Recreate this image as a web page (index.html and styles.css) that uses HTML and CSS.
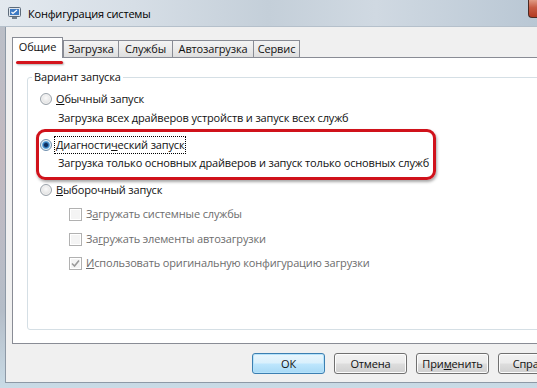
FILE: index.html
```html
<!DOCTYPE html>
<html lang="ru">
<head>
  <meta charset="UTF-8" />
  <title>Конфигурация системы</title>
  <link rel="stylesheet" href="styles.css">
</head>
<body>
  <div class="window">
    <div class="titlebar">
      <svg class="app-icon" width="13" height="12" viewBox="0 0 13 12">
        <rect x="0.5" y="0.5" width="12" height="9" rx="1" fill="#dfe5ec" stroke="#5d6b7a" />
        <rect x="2" y="2" width="9" height="6" fill="#3d79c2" />
        <path d="M3.5 5 L5 6.5 L9 3" stroke="#ffffff" stroke-width="1.2" fill="none" />
        <rect x="4" y="10" width="5" height="2" fill="#6f7d8b" />
      </svg>
      <span class="title">Конфигурация системы</span>
      <span class="close-btn"></span>
    </div>

    <div class="client">
      <div class="tabs">
        <div class="tab active">Общие</div>
        <div class="tab tab-boot">Загрузка</div>
        <div class="tab tab-services">Службы</div>
        <div class="tab tab-startup">Автозагрузка</div>
        <div class="tab tab-tools">Сервис</div>
      </div>

      <div class="panel">
        <fieldset class="group">
          <legend>Вариант запуска</legend>

          <div class="option">
            <span class="radio"></span>
            <span class="label"><u>О</u>бычный запуск</span>
          </div>
          <div class="hint">Загрузка всех драйверов устройств и запуск всех служб</div>

          <div class="marked">
            <div class="option option-gap">
              <span class="radio checked"></span>
              <span class="label focused">Диагности<u>ч</u>еский запуск</span>
            </div>
            <div class="hint hint-tight">Загрузка только основных драйверов и запуск только основных служб</div>
          </div>

          <div class="option option-gap">
            <span class="radio"></span>
            <span class="label"><u>В</u>ыборочный запуск</span>
          </div>

          <div class="check check-first">
            <span class="box"></span>
            <span class="label">З<u>а</u>гружать системные службы</span>
          </div>
          <div class="check">
            <span class="box"></span>
            <span class="label">За<u>г</u>ружать элементы автозагрузки</span>
          </div>
          <div class="check check-last">
            <span class="box">
              <svg width="9" height="9" viewBox="0 0 9 9"><path d="M1 4.5 L3.5 7 L8 1.5" stroke="#9a9a9a" stroke-width="1.6" fill="none" /></svg>
            </span>
            <span class="label"><u>И</u>спользовать оригинальную конфигурацию загрузки</span>
          </div>
        </fieldset>
      </div>

      <div class="buttons">
        <button class="btn btn-default">ОК</button>
        <button class="btn">Отмена</button>
        <button class="btn">При<u>м</u>енить</button>
        <button class="btn">Справка</button>
      </div>
    </div>
  </div>
</body>
</html>
```

FILE: styles.css
```css
* {
  box-sizing: border-box;
}
html, body {
  margin: 0;
  overflow: hidden;
}
body {
  width: 537px;
  height: 388px;
  font-family: 'Open Sans', 'Noto Sans', sans-serif;
  font-size: 11px;
  letter-spacing: -0.15px;
  color: #111;
  /* glass frame around the dialog */
  background: linear-gradient(180deg, #b9c0c9 0%, #c3b9c0 40%, #b4bdc8 80%, #c9dbe6 100%);
}
.window {
  display: flex;
  flex-direction: column;
  height: 388px;
}

/* Title bar */
.titlebar {
  height: 27px;
  display: flex;
  align-items: center;
  padding-left: 8px;
  background: linear-gradient(90deg, #e3e9ef 0%, #d6dee6 25%, #c4cfd9 50%, #d0d9e2 70%, #b9c7d4 100%);
  border-bottom: 1px solid #b5c0cb;
}
.app-icon {
  margin-right: 7px;
  margin-top: -1px;
}
.title {
  font-size: 11px;
  letter-spacing: -0.2px;
  color: #000;
}
.close-btn {
  align-self: flex-start;
  margin-left: auto;
  width: 9px;
  height: 18px;
  background: linear-gradient(180deg, #e09a84 0%, #c75a42 45%, #b33a22 100%);
  border: 1px solid #4a2a24;
  border-top: none;
  border-right: none;
  border-bottom-left-radius: 4px;
}

/* Client area */
.client {
  flex: 1;
  margin: 0 0 5px 5px;
  padding: 10px 0 0 6px;
  background: #f0f0f0;
  border-left: 1px solid #8d99a6;
  border-bottom: 1px solid #8d99a6;
}

.tabs {
  display: flex;
  align-items: flex-end;
}
.tab {
  height: 17px;
  line-height: 16px;
  text-align: center;
  border: 1px solid #898c95;
  border-bottom: none;
  background: linear-gradient(180deg, #f3f3f3 0%, #ebebeb 50%, #dedede 100%);
  margin-left: -1px;
}
.tab.active {
  position: relative;
  z-index: 1;
  width: 51px;
  height: 21px;
  line-height: 17px;
  margin-left: 0;
  margin-bottom: -1px;
  background: #fff;
}
/* red mark under the active tab */
.tab.active::after {
  content: "";
  position: absolute;
  left: 3px;
  top: 23px;
  width: 47px;
  height: 3px;
  border-radius: 2px;
  background: #d4141c;
  box-shadow: 1px 1px 2px rgba(0, 0, 0, 0.3);
}
.tab-boot {
  width: 56px;
  margin-left: 0;
}
.tab-services {
  width: 55px;
}
.tab-startup {
  width: 82px;
}
.tab-tools {
  width: 47px;
}

.panel {
  width: 600px;
  height: 287px;
  padding: 11px 0 0 14px;
  background: #fff;
  border: 1px solid #898c95;
}

.group {
  width: 600px;
  height: 261px;
  margin: 0;
  padding: 6px 0 0 12px;
  border: 1px solid #d5dfe5;
  border-radius: 3px;
}
.group legend {
  margin-left: -8px;
  padding: 0 2px;
  line-height: 16px;
}

.option,
.check {
  display: flex;
  align-items: center;
  height: 16px;
  line-height: 16px;
}
.option-gap {
  margin-top: 11px;
}
.option .label {
  margin-left: 4px;
}
.hint {
  margin-top: 3px;
  padding-left: 18px;
  line-height: 16px;
}
.hint-tight {
  margin-top: 2px;
}
.label u,
.btn u {
  text-decoration-thickness: 1px;
  text-underline-offset: 1px;
}
.focused {
  outline: 1px dotted #000;
  outline-offset: 0;
  padding: 0 1px;
  margin-left: 3px !important;
}

.marked {
  position: relative;
}
.marked::before {
  content: "";
  position: absolute;
  left: -4px;
  top: -8px;
  width: 394px;
  bottom: -9px;
  border: 3px solid #d0121b;
  border-radius: 9px;
  box-shadow: 1px 2px 3px rgba(0, 0, 0, 0.35);
}

.radio {
  width: 12px;
  height: 12px;
  border-radius: 50%;
  border: 1px solid #9ba3ab;
  background: radial-gradient(circle at 50% 40%, #fafafa 0%, #e7e7e7 55%, #cfcfcf 100%);
  box-shadow: inset 0 0 0 1px #f3f3f3;
}
.radio.checked {
  border-color: #6f8fae;
  background: radial-gradient(circle at 50% 50%, #0f2e5c 0 1.5px, #2e6fb0 2.5px, #7cc3ef 4px, #dde9f3 5px, #f0f4f8 100%);
}

.check {
  padding-left: 29px;
  color: #6d6d6d;
  margin-top: 9px;
}
.check-first {
  margin-top: 8px;
}
.check-last {
  margin-top: 8px;
}
.box {
  width: 13px;
  height: 13px;
  border: 1px solid #b1b1b1;
  background: #f4f4f4;
  box-shadow: inset 0 0 0 1px #fff;
  display: flex;
  align-items: center;
  justify-content: center;
  margin-right: 4px;
}

/* Dialog buttons */
.buttons {
  display: flex;
  gap: 9px;
  margin-top: 9px;
  padding-left: 240px;
}
.btn {
  flex: none;
  width: 73px;
  height: 21px;
  padding: 0;
  font-family: inherit;
  font-size: 11px;
  letter-spacing: inherit;
  color: #111;
  border: 1px solid #707070;
  border-radius: 3px;
  background: linear-gradient(180deg, #f2f2f2 0%, #ebebeb 48%, #dddddd 52%, #cfcfcf 100%);
  box-shadow: inset 0 0 0 1px #fcfcfc;
}
.btn-default {
  border-color: #3c7fb1;
  background: linear-gradient(180deg, #eaf6fd 0%, #d9f0fc 48%, #bee6fd 52%, #a7d9f5 100%);
  box-shadow: inset 0 0 0 1px #b6e3fb;
}
```
